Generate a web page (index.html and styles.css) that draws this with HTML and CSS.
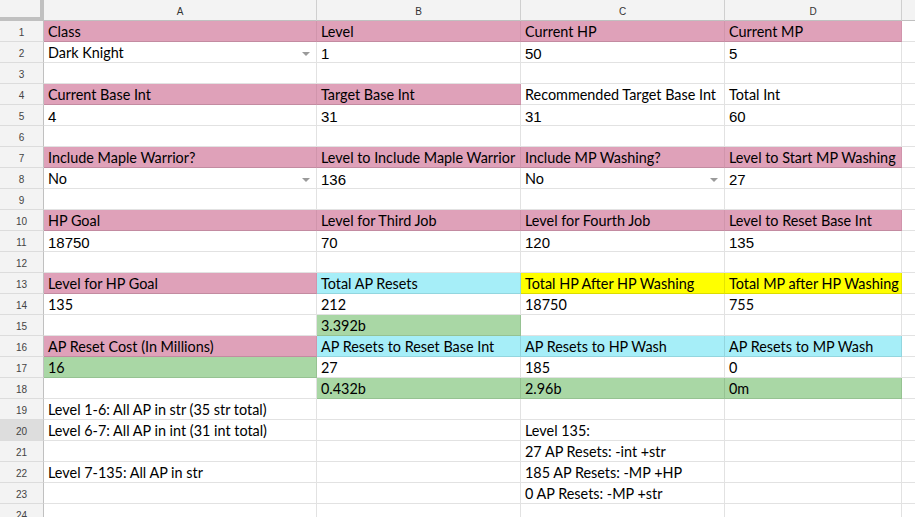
FILE: index.html
```html
<!DOCTYPE html>
<html>
<head>
<meta charset="utf-8">
<link rel="stylesheet" href="styles.css">
</head>
<body>
<div class="sheet">
  <div class="corner"></div>
  <div class="colhead">A</div><div class="colhead">B</div><div class="colhead">C</div><div class="colhead">D</div><div class="colhead last"></div>

  <div class="rowhead">1</div>
  <div class="cell pink">Class</div><div class="cell pink">Level</div><div class="cell pink">Current HP</div><div class="cell pink">Current MP</div><div class="cell"></div>

  <div class="rowhead">2</div>
  <div class="cell">Dark Knight<span class="arrow"></span></div><div class="cell num">1</div><div class="cell num">50</div><div class="cell num">5</div><div class="cell"></div>

  <div class="rowhead">3</div>
  <div class="cell"></div><div class="cell"></div><div class="cell"></div><div class="cell"></div><div class="cell"></div>

  <div class="rowhead">4</div>
  <div class="cell pink">Current Base Int</div><div class="cell pink">Target Base Int</div><div class="cell">Recommended Target Base Int</div><div class="cell">Total Int</div><div class="cell"></div>

  <div class="rowhead">5</div>
  <div class="cell num">4</div><div class="cell num">31</div><div class="cell num">31</div><div class="cell num">60</div><div class="cell"></div>

  <div class="rowhead">6</div>
  <div class="cell"></div><div class="cell"></div><div class="cell"></div><div class="cell"></div><div class="cell"></div>

  <div class="rowhead">7</div>
  <div class="cell pink">Include Maple Warrior?</div><div class="cell pink">Level to Include Maple Warrior</div><div class="cell pink">Include MP Washing?</div><div class="cell pink">Level to Start MP Washing</div><div class="cell"></div>

  <div class="rowhead">8</div>
  <div class="cell">No<span class="arrow"></span></div><div class="cell num">136</div><div class="cell">No<span class="arrow"></span></div><div class="cell num">27</div><div class="cell"></div>

  <div class="rowhead">9</div>
  <div class="cell"></div><div class="cell"></div><div class="cell"></div><div class="cell"></div><div class="cell"></div>

  <div class="rowhead">10</div>
  <div class="cell pink">HP Goal</div><div class="cell pink">Level for Third Job</div><div class="cell pink">Level for Fourth Job</div><div class="cell pink">Level to Reset Base Int</div><div class="cell"></div>

  <div class="rowhead">11</div>
  <div class="cell num">18750</div><div class="cell num">70</div><div class="cell num">120</div><div class="cell num">135</div><div class="cell"></div>

  <div class="rowhead">12</div>
  <div class="cell"></div><div class="cell"></div><div class="cell"></div><div class="cell"></div><div class="cell"></div>

  <div class="rowhead">13</div>
  <div class="cell pink">Level for HP Goal</div><div class="cell cyan">Total AP Resets</div><div class="cell yellow">Total HP After HP Washing</div><div class="cell yellow">Total MP after HP Washing</div><div class="cell"></div>

  <div class="rowhead">14</div>
  <div class="cell">135</div><div class="cell">212</div><div class="cell">18750</div><div class="cell">755</div><div class="cell"></div>

  <div class="rowhead">15</div>
  <div class="cell"></div><div class="cell green">3.392b</div><div class="cell"></div><div class="cell"></div><div class="cell"></div>

  <div class="rowhead">16</div>
  <div class="cell pink">AP Reset Cost (In Millions)</div><div class="cell cyan">AP Resets to Reset Base Int</div><div class="cell cyan">AP Resets to HP Wash</div><div class="cell cyan">AP Resets to MP Wash</div><div class="cell"></div>

  <div class="rowhead">17</div>
  <div class="cell green">16</div><div class="cell">27</div><div class="cell">185</div><div class="cell">0</div><div class="cell"></div>

  <div class="rowhead">18</div>
  <div class="cell"></div><div class="cell green">0.432b</div><div class="cell green">2.96b</div><div class="cell green">0m</div><div class="cell"></div>

  <div class="rowhead">19</div>
  <div class="cell">Level 1-6: All AP in str (35 str total)</div><div class="cell"></div><div class="cell"></div><div class="cell"></div><div class="cell"></div>

  <div class="rowhead sel">20</div>
  <div class="cell">Level 6-7: All AP in int (31 int total)</div><div class="cell"></div><div class="cell">Level 135:</div><div class="cell"></div><div class="cell"></div>

  <div class="rowhead">21</div>
  <div class="cell"></div><div class="cell"></div><div class="cell">27 AP Resets: -int +str</div><div class="cell"></div><div class="cell"></div>

  <div class="rowhead">22</div>
  <div class="cell">Level 7-135: All AP in str</div><div class="cell"></div><div class="cell">185 AP Resets: -MP +HP</div><div class="cell"></div><div class="cell"></div>

  <div class="rowhead">23</div>
  <div class="cell"></div><div class="cell"></div><div class="cell">0 AP Resets: -MP +str</div><div class="cell"></div><div class="cell"></div>

  <div class="rowhead">24</div>
  <div class="cell"></div><div class="cell"></div><div class="cell"></div><div class="cell"></div><div class="cell"></div>
</div>
</body>
</html>
```
FILE: styles.css
```css
html, body {
  margin: 0;
  padding: 0;
  background: #ffffff;
  overflow: hidden;
}
body {
  width: 915px;
  height: 517px;
}
.sheet {
  display: grid;
  grid-template-columns: 44px 273px 204px 204px 177px 40px;
  grid-template-rows: 21px repeat(24, 21px);
  font-family: Lato, "Open Sans", sans-serif;
  font-size: 14.4px;
  color: #000;
}
.corner {
  background: #f3f3f3;
  border-right: 4px solid #c0c0c0;
  border-bottom: 4px solid #c0c0c0;
  box-sizing: border-box;
}
.colhead {
  background: #f3f3f3;
  border-right: 1px solid #cfcfcf;
  border-bottom: 1px solid #c0c0c0;
  box-sizing: border-box;
  font-family: "Liberation Sans", Arial, sans-serif;
  font-size: 10px;
  color: #333;
  display: flex;
  align-items: center;
  justify-content: center;
  padding-top: 2px;
}
.rowhead {
  background: #f3f3f3;
  border-right: 1px solid #c0c0c0;
  border-bottom: 1px solid #dcdcdc;
  box-sizing: border-box;
  font-family: "Liberation Sans", Arial, sans-serif;
  font-size: 10px;
  color: #444;
  display: flex;
  align-items: center;
  justify-content: center;
  padding-top: 2px;
}
.rowhead.sel {
  background: #dddddd;
}
.cell {
  position: relative;
  box-sizing: border-box;
  border-right: 1px solid #e2e2e2;
  border-bottom: 1px solid #e2e2e2;
  padding: 0 4px 1px 4px;
  display: flex;
  align-items: flex-end;
  white-space: nowrap;
  line-height: 17px;
}
.cell.num {
  font-family: "Liberation Sans", Arial, sans-serif;
  font-size: 15px;
  line-height: 16px;
  padding-bottom: 0;
}
.pink {
  background: #dfa1b9;
  border-bottom-color: #c38ba1;
  border-right-color: #d195ac;
}
.cyan {
  background: #a6eef8;
  border-bottom-color: #93d6df;
  border-right-color: #93d6df;
}
.yellow {
  background: #ffff00;
  border-bottom-color: #dcdc00;
  border-right-color: #e5e500;
}
.green {
  background: #a9d7a5;
  border-bottom-color: #96c292;
  border-right-color: #96c292;
}
.arrow {
  position: absolute;
  right: 6px;
  top: 10px;
  width: 0;
  height: 0;
  border-left: 4px solid transparent;
  border-right: 4px solid transparent;
  border-top: 4px solid #9a9a9a;
}
```
